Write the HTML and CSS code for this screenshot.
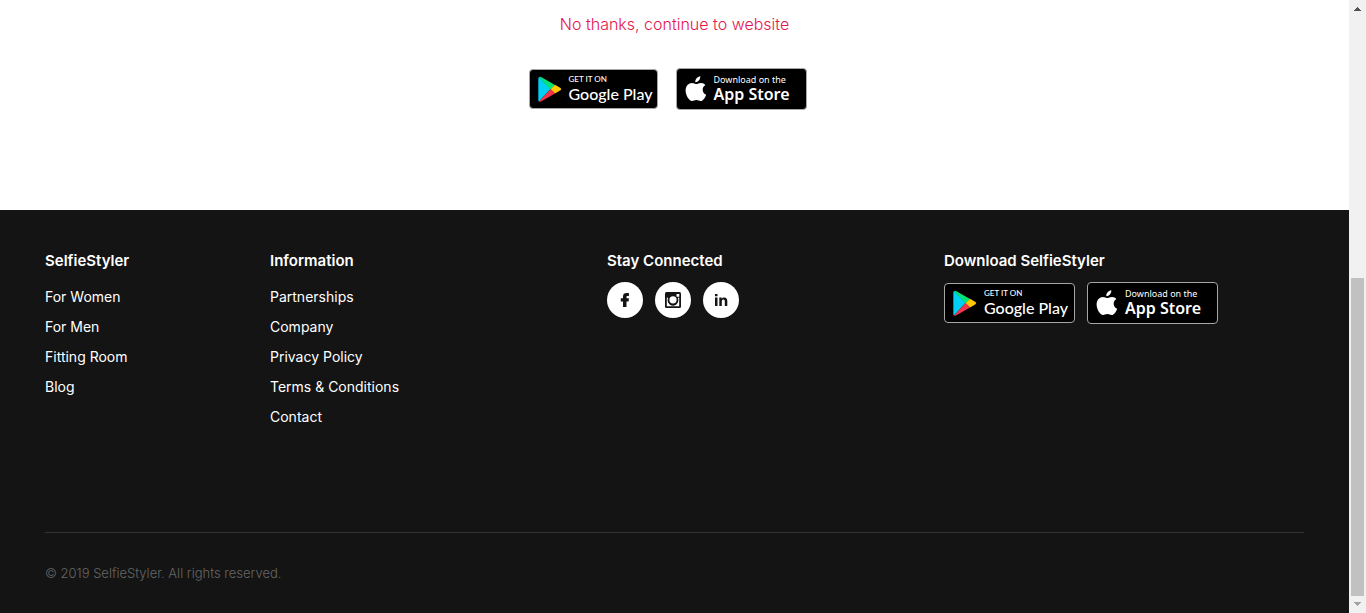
FILE: index.html
```
<!DOCTYPE html>
<html lang="en">
<head>
<meta charset="utf-8">
<meta name="viewport" content="width=device-width, initial-scale=1">
<title>SelfieStyler</title>
<link rel="stylesheet" href="styles.css">
</head>
<body>
<svg class="defs" aria-hidden="true">
  <symbol id="play" viewBox="0 0 24 26">
    <path fill="#00d0f5" d="M1 1 12.500 13 1 25.500Q.3 25 .3 24V2.500Q.3 1.500 1 1Z"/>
    <path fill="#00e676" d="M1 1Q1.800.3 3 1L17 9 12.500 13.500Z"/>
    <path fill="#ffc800" d="M17 8.800 22.500 12Q24 13 22.500 14.200L17 17.500 12.500 13.200Z"/>
    <path fill="#f6344b" d="M12.500 13 17 17.500 3 25.400Q1.800 26 1 25.500Z"/>
  </symbol>
  <symbol id="apple" viewBox="0 0 22 26">
    <path fill="#fff" d="M15.300.3C15.500 3.500 13 6.300 10.300 6.200 10 3.400 12.500.7 15.300.3ZM20.400 9C18.500 10.200 17.700 11.700 17.700 13.700 17.700 16 19 17.800 21.200 18.700 20.200 21.600 18 25 15.700 25 14.200 25 13.500 24 11.400 24 9.300 24 8.500 25 7.100 25 3.900 25 .6 19.300.6 14.600.6 9.800 3.700 7 7 7 8.800 7 10.200 8.100 11.300 8.100 12.400 8.100 14 6.900 16.100 6.900 17.800 6.900 19.500 7.700 20.400 9Z"/>
  </symbol>
</svg>
<div class="page">
  <main class="intro">
    <a class="skip" href="#">No thanks, continue to website</a>
    <div class="badges badges-intro">
      <a class="badge google" href="#"><svg class="play"><use href="#play"/></svg><span class="label"><small>GET IT ON</small><span class="store">Google Play</span></span></a>
      <a class="badge apple" href="#"><svg class="fruit"><use href="#apple"/></svg><span class="label"><small>Download on the</small><span class="store">App Store</span></span></a>
    </div>
  </main>
  <footer class="footer">
    <div class="columns">
      <section>
        <h2>SelfieStyler</h2>
        <ul>
          <li><a href="#">For Women</a></li>
          <li><a href="#">For Men</a></li>
          <li><a href="#">Fitting Room</a></li>
          <li><a href="#">Blog</a></li>
        </ul>
      </section>
      <section>
        <h2>Information</h2>
        <ul>
          <li><a href="#">Partnerships</a></li>
          <li><a href="#">Company</a></li>
          <li><a href="#">Privacy Policy</a></li>
          <li><a href="#">Terms &amp; Conditions</a></li>
          <li><a href="#">Contact</a></li>
        </ul>
      </section>
      <section>
        <h2>Stay Connected</h2>
        <div class="social">
          <a href="#" aria-label="Facebook"><svg viewBox="0 0 36 36"><path fill="#141414" d="M16 25V19.400H13.800V16.300H16V14.700C16 12.200 17.300 11.100 19.700 11.100H21.900V14H20.600C19.800 14 19.500 14.300 19.500 15V16.300H21.900L21.600 19.400H19.500V25Z"/></svg></a>
          <a href="#" aria-label="Instagram"><svg viewBox="0 0 36 36"><rect x="10" y="10" width="16" height="16" rx="1.500" fill="#141414"/><path fill="#fff" d="M11.800 15.800H13.500A5.200 5.200 0 1 0 22.500 15.800H24.200V24.200H11.800Z"/><circle cx="18" cy="17.800" r="5.200" fill="#141414"/><circle cx="18" cy="17.800" r="3.600" fill="#fff"/><rect x="21.500" y="12" width="2.800" height="2.800" rx=".5" fill="#fff"/></svg></a>
          <a href="#" aria-label="LinkedIn"><svg viewBox="0 0 36 36"><path fill="#141414" d="M12 15.600H14.500V24H12ZM12 12H14.500V14.200H12ZM16.300 15.600H18.700V16.700C19.300 15.800 20.200 15.400 21.200 15.400 23.300 15.400 24.300 16.700 24.300 19V24H21.800V19.500C21.800 18.200 21.400 17.500 20.400 17.500 19.300 17.500 18.800 18.300 18.800 19.500V24H16.300Z"/></svg></a>
        </div>
      </section>
      <section>
        <h2>Download SelfieStyler</h2>
        <div class="badges">
          <a class="badge google" href="#"><svg class="play"><use href="#play"/></svg><span class="label"><small>GET IT ON</small><span class="store">Google Play</span></span></a>
          <a class="badge apple" href="#"><svg class="fruit"><use href="#apple"/></svg><span class="label"><small>Download on the</small><span class="store">App Store</span></span></a>
        </div>
      </section>
    </div>
    <p class="legal">© 2019 SelfieStyler. All rights reserved.</p>
  </footer>
</div>
<div class="scrollbar" aria-hidden="true">
  <svg viewBox="0 0 17 17"><path fill="#505050" d="M8 7H9V8H10V9H11V10H12V11H5V10H6V9H7V8H8Z"/></svg>
  <div class="track"><div class="thumb"></div></div>
  <svg viewBox="0 0 17 17"><path fill="#a3a3a3" d="M5 6H12V7H11V8H10V9H9V10H8V9H7V8H6V7H5Z"/></svg>
</div>
</body>
</html>
```
FILE: styles.css
```
* { box-sizing: border-box; }

body {
  display: flex;
  min-height: 100vh;
  margin: 0;
  background: #fff;
  font-family: Inter, "Liberation Sans", sans-serif;
  font-size: 14px;
}

a { color: inherit; text-decoration: none; }

.defs { position: absolute; width: 0; height: 0; }

.page {
  display: flex;
  flex: 1;
  flex-direction: column;
}

.intro {
  display: flex;
  flex-direction: column;
  align-items: center;
  padding: 12px 0 100px;
}

.skip {
  color: #e5154f;
  font-size: 16px;
  font-weight: 300;
  line-height: 24px;
}

.badges {
  display: flex;
  align-items: center;
  gap: 12px;
}

.badges-intro {
  gap: 18px;
  margin-top: 32px;
  padding-right: 14px;
}

.badge {
  display: flex;
  align-items: center;
  gap: 7px;
  width: 131px;
  height: 40px;
  padding-left: 8px;
  border: 1px solid #a6a6a6;
  border-radius: 4px;
  background: #000;
  color: #fff;
  white-space: nowrap;
}

.badges-intro .google { width: 129px; }

.badge svg { flex: none; }
.play { width: 24px; height: 26px; }
.fruit { width: 22px; height: 26px; }

.label { display: flex; flex-direction: column; }

.google small {
  font-family: Lato, sans-serif;
  font-size: 8px;
  font-weight: 500;
  line-height: 10px;
}

.google .store {
  font-family: Lato, sans-serif;
  font-size: 16px;
  font-weight: 500;
  line-height: 20px;
}

.apple { height: 42px; }

.apple small {
  font-family: "Noto Sans", sans-serif;
  font-size: 9px;
  line-height: 12px;
}

.apple .store {
  padding-bottom: 3px;
  font-family: "Noto Sans", sans-serif;
  font-size: 16px;
  font-weight: 600;
  line-height: 16px;
}

.footer {
  flex: 1;
  padding: 41px 45px 24px;
  background: #141414;
  color: #fff;
}

.columns {
  display: grid;
  grid-template-columns: 225fr 337fr 337fr 360fr;
  min-height: 281px;
}

h2 {
  margin: 0;
  font-size: 15px;
  font-weight: 600;
  line-height: 20px;
}

ul {
  margin: 11px 0 0;
  padding: 0;
  list-style: none;
}

li { line-height: 30px; }

.social {
  display: flex;
  gap: 12px;
  margin-top: 11px;
}

.social a {
  width: 36px;
  height: 36px;
  border-radius: 50%;
  background: #fff;
}

.social svg { display: block; }

.columns .badges { margin-top: 11px; }

.legal {
  margin: 0;
  padding-top: 30px;
  border-top: 1px solid #333;
  color: #666;
  font-size: 13px;
  font-weight: 300;
  line-height: 20px;
}

.scrollbar {
  display: flex;
  flex-direction: column;
  width: 17px;
  background: #f1f1f1;
}

.track {
  display: flex;
  flex: 1;
  align-items: flex-end;
  padding: 0 2px;
}

.thumb {
  width: 100%;
  height: 55%;
  background: #c1c1c1;
}
```
